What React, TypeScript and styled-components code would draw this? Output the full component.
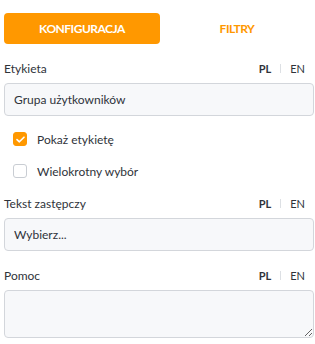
import { useState } from "react";
import styled, { createGlobalStyle } from "styled-components";

const orange = "#ff9800";
const text = "#2f333a";
const fieldBg = "#f7f8fa";
const fieldBorder = "#d3d6db";

const GlobalStyle = createGlobalStyle`
  body {
    margin: 0;
    background: #ffffff;
    font-family: Lato, "Open Sans", sans-serif;
    color: ${text};
  }
  * {
    box-sizing: border-box;
  }
`;

type Lang = "PL" | "EN";

export default function App() {
  const [tab, setTab] = useState<"config" | "filters">("config");
  const [showLabel, setShowLabel] = useState(true);
  const [multi, setMulti] = useState(false);

  return (
    <>
      <GlobalStyle />
      <Panel>
        <Tabs>
          <Tab $active={tab === "config"} onClick={() => setTab("config")}>
            KONFIGURACJA
          </Tab>
          <Tab $active={tab === "filters"} onClick={() => setTab("filters")}>
            FILTRY
          </Tab>
        </Tabs>

        <Field>
          <LabelRow label="Etykieta" />
          <Input defaultValue="Grupa użytkowników" />
        </Field>

        <CheckList>
          <CheckRow>
            <Box $checked={showLabel} onClick={() => setShowLabel(!showLabel)}>
              {showLabel && (
                <svg width="9" height="7" viewBox="0 0 9 7">
                  <path d="M1 3.6 L3.4 5.8 L8 1.2" fill="none" stroke="#fff" strokeWidth="1.6" strokeLinecap="round" strokeLinejoin="round" />
                </svg>
              )}
            </Box>
            <CheckText>Pokaż etykietę</CheckText>
          </CheckRow>
          <CheckRow>
            <Box $checked={multi} onClick={() => setMulti(!multi)} />
            <CheckText>Wielokrotny wybór</CheckText>
          </CheckRow>
        </CheckList>

        <Field $tight>
          <LabelRow label="Tekst zastępczy" />
          <Input placeholder="Wybierz..." />
        </Field>

        <Field>
          <LabelRow label="Pomoc" />
          <TextArea />
        </Field>
      </Panel>
    </>
  );
}

function LabelRow({ label }: { label: string }) {
  const [lang, setLang] = useState<Lang>("PL");
  return (
    <Head>
      <Label>{label}</Label>
      <Langs>
        <LangButton $active={lang === "PL"} onClick={() => setLang("PL")}>PL</LangButton>
        <Divider />
        <LangButton $active={lang === "EN"} onClick={() => setLang("EN")}>EN</LangButton>
      </Langs>
    </Head>
  );
}

const Panel = styled.div`
  width: 310px;
  margin-left: 4px;
  padding-top: 13px;
  display: flex;
  flex-direction: column;
`;

const Tabs = styled.div`
  display: grid;
  grid-template-columns: 156px 1fr;
  height: 31px;
`;

const Tab = styled.button<{ $active: boolean }>`
  border: none;
  border-radius: 4px;
  background: ${(p) => (p.$active ? orange : "transparent")};
  color: ${(p) => (p.$active ? "#ffffff" : orange)};
  font-family: inherit;
  font-size: 12px;
  font-weight: 700;
  letter-spacing: -0.5px;
  cursor: pointer;
  padding: 0;
`;

const Field = styled.div<{ $tight?: boolean }>`
  margin-top: ${(p) => (p.$tight ? "8px" : "16px")};
  display: flex;
  flex-direction: column;
  gap: 7px;
`;

const Head = styled.div`
  height: 16px;
  display: flex;
  align-items: center;
  justify-content: space-between;
`;

const Label = styled.span`
  font-size: 12px;
  color: ${text};
`;

const Langs = styled.div`
  display: flex;
  align-items: center;
  gap: 9px;
  padding-right: 9px;
`;

const LangButton = styled.span<{ $active: boolean }>`
  font-size: 11px;
  font-weight: ${(p) => (p.$active ? 700 : 400)};
  color: ${text};
  cursor: pointer;
`;

const Divider = styled.span`
  width: 1px;
  height: 9px;
  background: #dde0e4;
`;

const Input = styled.input`
  height: 33px;
  width: 100%;
  border: 1px solid ${fieldBorder};
  border-radius: 4px;
  background: ${fieldBg};
  padding: 0 9px;
  font-family: inherit;
  font-size: 12px;
  color: ${text};
  outline: none;
  &::placeholder {
    color: ${text};
  }
`;

const TextArea = styled.textarea`
  height: 48px;
  width: 100%;
  border: 1px solid ${fieldBorder};
  border-radius: 4px;
  background: ${fieldBg};
  font-family: inherit;
  font-size: 12px;
  outline: none;
  display: block;
`;

const CheckList = styled.div`
  padding: 7px 0 0 9px;
  display: flex;
  flex-direction: column;
`;

const CheckRow = styled.label`
  height: 32px;
  display: flex;
  align-items: center;
  gap: 10px;
  cursor: pointer;
`;

const Box = styled.span<{ $checked: boolean }>`
  width: 14px;
  height: 14px;
  border-radius: 3px;
  border: 1px solid ${(p) => (p.$checked ? orange : "#c9cdd3")};
  background: ${(p) => (p.$checked ? orange : "#ffffff")};
  display: flex;
  align-items: center;
  justify-content: center;
`;

const CheckText = styled.span`
  font-size: 12px;
  color: ${text};
`;
